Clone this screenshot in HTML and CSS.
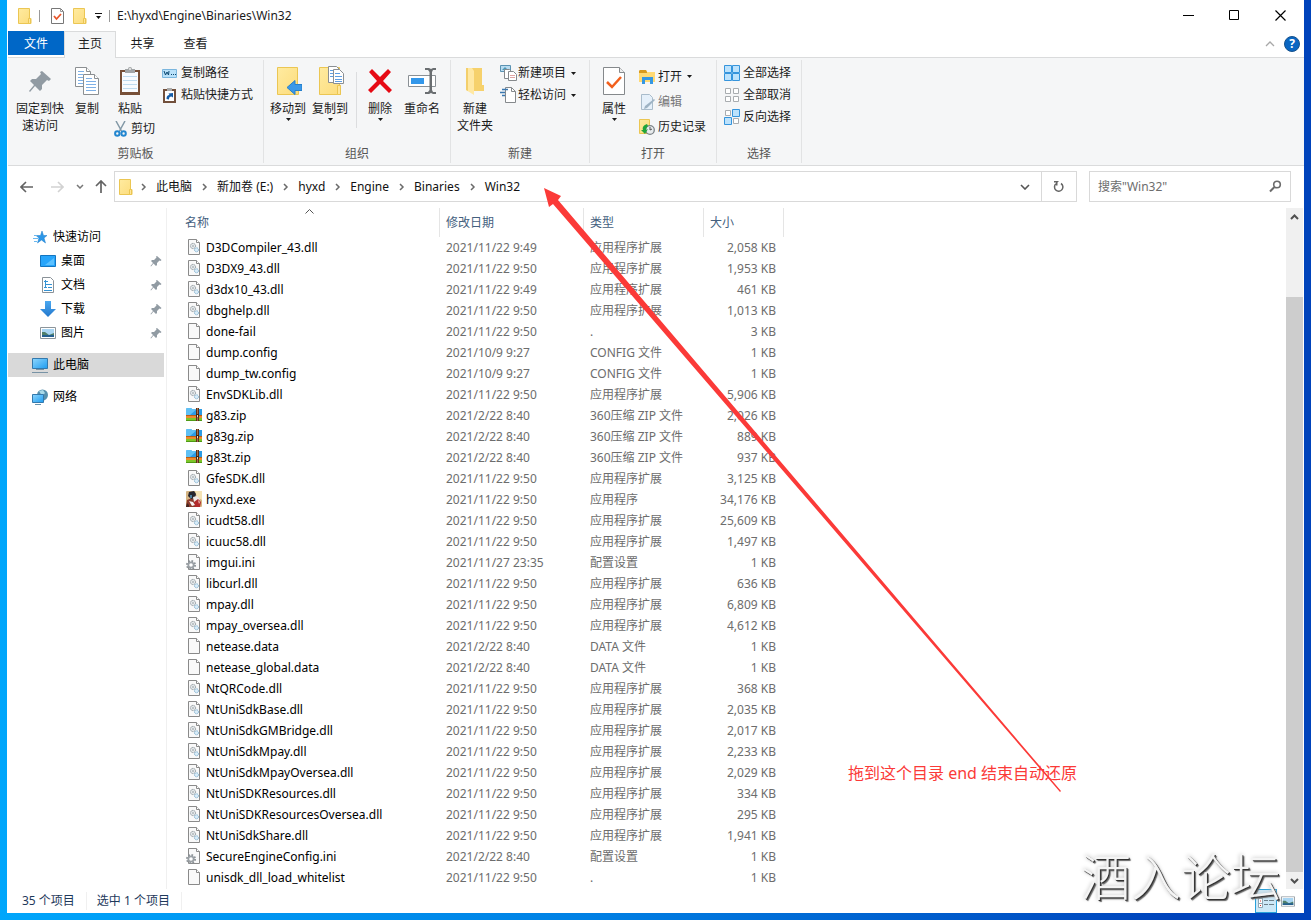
FILE: index.html
```html
<!DOCTYPE html>
<html lang="zh-CN">
<head>
<meta charset="utf-8">
<title>E:\hyxd\Engine\Binaries\Win32</title>
<link rel="stylesheet" href="styles.css">
</head>
<body>
<svg class="defs" aria-hidden="true">
  <linearGradient id="gf" x1="0" y1="0" x2="1" y2="1"><stop offset="0" stop-color="#ffeba0"/><stop offset="1" stop-color="#fcdc7c"/></linearGradient>
  <linearGradient id="gb" x1="0" y1="0" x2="1" y2="1"><stop offset="0" stop-color="#8ed6fd"/><stop offset="1" stop-color="#1e9cf0"/></linearGradient>
  <linearGradient id="gd" x1="0" y1="0" x2="0" y2="1"><stop offset="0" stop-color="#4aa8f0"/><stop offset="1" stop-color="#2277cc"/></linearGradient>
  <symbol id="page" viewBox="0 0 16 16"><path d="M2.500.500h8l3 3v12h-11z" fill="#f9f9f9" stroke="#8a8a8a"/><path d="M10.500.500v3h3" fill="#fff" stroke="#8a8a8a"/></symbol>
  <symbol id="dll" viewBox="0 0 16 16"><path d="M2.500.500h8l3 3v12h-11z" fill="#f9f9f9" stroke="#8a8a8a"/><path d="M10.500.500v3h3" fill="#fff" stroke="#8a8a8a"/><circle cx="7" cy="7" r="2.600" fill="#e4e8ea" stroke="#8d969c" stroke-dasharray="1.300 .5"/><circle cx="7" cy="7" r=".8" fill="#8d969c"/><circle cx="10.500" cy="10.800" r="2" fill="#d9ecf8" stroke="#82b1cf" stroke-dasharray="1.100 .4"/></symbol>
  <symbol id="ini" viewBox="0 0 16 16"><path d="M2.500.500h8l3 3v12h-11z" fill="#f9f9f9" stroke="#8a8a8a"/><path d="M10.500.500v3h3" fill="#fff" stroke="#8a8a8a"/><circle cx="5" cy="11" r="4" fill="none" stroke="#8b9196" stroke-width="2" stroke-dasharray="1.600 1.540"/><circle cx="5" cy="11" r="2.700" fill="#fff" stroke="#9aa0a5" stroke-width="1.800"/></symbol>
  <symbol id="zip" viewBox="0 0 16 16"><path d="M0 2l1-1h4l1 1h10v6H0z" fill="#2b9be4"/><path d="M0 2l1-1h4l1 1h5L4 8H0z" fill="#5fc0f4"/><path d="M0 8h16v3H0z" fill="#ee8a2c"/><path d="M0 8h16v1H0z" fill="#b95e18"/><path d="M0 11h16v3H0z" fill="#7dc62a"/><path d="M0 13h16v1H0z" fill="#4f9a16"/><path d="M10 1h3v13h-3z" fill="#5b3018"/><path d="M11 1h1v13h-1z" fill="#a8714a"/><path d="M10 7h3v3h-3z" fill="#3f2616"/><path d="M11 8h1v2h-1z" fill="#f3ddb8"/></symbol>
  <symbol id="exe" viewBox="0 0 16 16"><rect width="16" height="16" rx="1" fill="#d5b584"/><path d="M9 0h7v9l-5-3z" fill="#f4e3b6"/><path d="M0 16l1-7 5-2 5 3 1 6z" fill="#8c3b2c"/><path d="M3 1l5-1 2 3-1 4-4 1-3-3z" fill="#26262e"/><path d="M4 4h2v3H4z" fill="#4e7f9b"/><path d="M7 6l4-1 3 3-3 4-3-1z" fill="#efeae8"/><path d="M8 11l4-3 3 3-1 5H9z" fill="#b22a2c"/><path d="M3 10l4 1 2 3-3 1z" fill="#f7f1f2"/><path d="M12 9l2 2-1 2z" fill="#f4c5be"/><path d="M1 12l2 2v2H0z" fill="#452520"/></symbol>
  <symbol id="folder" viewBox="0 0 14 16"><path d="M.500.500h11v10h1.500v5H.500z" fill="url(#gf)" stroke="#ebc653"/><path d="M10.500 15.500v-5h2v5z" fill="#ffe69a" stroke="#ebc653"/></symbol>
  <symbol id="pin" viewBox="0 0 24 24"><path d="M14 2l9 8-2 2-2-1-5 5 0 4-2 2-5-5-5 6-1-1 5-6-4-4 2-2 4 0 5-5-1-2z" fill="#919ba3"/></symbol>
  <symbol id="caret" viewBox="0 0 5 3"><path d="M0 0h5L2.500 3z" fill="#1a1a1a"/></symbol>
  <symbol id="sep" viewBox="0 0 24 12"><path d="M10.500 3l3 3-3 3" fill="none" stroke="#6b6b6b" stroke-width="1.500"/></symbol>
  <symbol id="picture" viewBox="0 0 16 12"><path d="M.500.500h15v11H.500z" fill="#fff" stroke="#8c959b"/><path d="M2 2h12v8H2z" fill="#a9d5f2"/><path d="M2 5l3 0 4 3 5-2v4H2z" fill="#4f7f6b"/><path d="M2 8l12 0v2H2z" fill="#25608f"/></symbol>
</svg>

<main class="window">
  <header class="titlebar">
    <svg class="q-folder" width="14" height="16"><use href="#folder"/></svg>
    <i class="bar"></i>
    <button class="plain q-check" aria-label="属性"><svg width="13" height="16" viewBox="0 0 13 16"><path d="M.500.500h9l3 3v12H.500z" fill="#fff" stroke="#777"/><path d="M9.500.500v3h3" fill="none" stroke="#999"/><path d="M3 8l2.500 3L10 6" fill="none" stroke="#e8562a" stroke-width="1.800"/></svg></button>
    <button class="plain q-new" aria-label="新建文件夹"><svg width="14" height="16"><use href="#folder"/></svg></button>
    <button class="plain q-more" aria-label="自定义快速访问工具栏"><svg width="7" height="6" viewBox="0 0 7 6"><path d="M0 0h7v1H0zM1 3h5L3.500 6z" fill="#111"/></svg></button>
    <i class="bar"></i>
    <h1>E:\hyxd\Engine\Binaries\Win32</h1>
    <div class="controls">
      <button class="plain" aria-label="最小化"><svg width="11" height="11"><path d="M0 5.500h11" stroke="#000"/></svg></button>
      <button class="plain" aria-label="最大化"><svg width="11" height="11"><path d="M.500.500h9v9h-9z" fill="none" stroke="#000"/></svg></button>
      <button class="plain" aria-label="关闭"><svg width="11" height="11"><path d="M.500.500l10 10M10.500.500l-10 10" stroke="#000" stroke-width="1.200"/></svg></button>
    </div>
  </header>

  <nav class="tabs">
    <button class="tab file">文件</button>
    <button class="tab active">主页</button>
    <button class="tab">共享</button>
    <button class="tab">查看</button>
    <div class="tab-tools">
      <button class="plain" aria-label="折叠功能区"><svg width="10" height="6" viewBox="0 0 10 6"><path d="M1 5l4-4 4 4" fill="none" stroke="#a8a8a8" stroke-width="1.300"/></svg></button>
      <button class="help" aria-label="帮助">?</button>
    </div>
  </nav>

  <section class="ribbon">
    <div class="group">
      <div class="group-body clip">
        <button class="big w56"><span class="pic"><svg width="24" height="24"><use href="#pin"/></svg></span>固定到快<br>速访问</button>
        <button class="big w38"><span class="pic"><svg width="26" height="30" viewBox="0 0 26 30"><g fill="#fff" stroke="#8b8f92"><path d="M1.500 1.500h11l4 4v15h-15z"/><path d="M12.500 1.500v4h4M9.500 8.500h11l4 4v16h-15z"/><path d="M20.500 8.500v4h4"/></g><path d="M4 5.500h6M4 8.500h5M4 11.500h5M4 14.500h5M4 17.500h5M12 12.500h6M12 15.500h10M12 18.500h10M12 21.500h10M12 24.500h10" stroke="#7eb0e6"/></svg></span>复制</button>
        <div class="paste-col">
          <button class="big w48"><span class="pic"><svg width="22" height="30" viewBox="0 0 22 30"><path d="M1 4h20v25H1z" fill="#775038"/><path d="M3 6h16v20H3z" fill="#f8fcff"/><path d="M4 10.500h14M4 14.500h14M4 18.500h14M4 22.500h14" stroke="#bfdcf0"/><path d="M6 3h3a2 2 0 0 1 4 0h3v4H6z" fill="#a2a6a8"/><circle cx="11" cy="3" r="1" fill="#eee"/></svg></span>粘贴</button>
          <button class="small cut"><svg width="13" height="16" viewBox="0 0 13 16"><path d="M2 0l5.500 10M11 0L5.500 10" stroke="#8298a6" stroke-width="1.500"/><g fill="none" stroke="#2386cf" stroke-width="2"><circle cx="3.300" cy="12.500" r="2.200"/><circle cx="9.600" cy="12.500" r="2.200"/></g></svg>剪切</button>
        </div>
        <div class="smalls">
          <button class="small"><svg width="16" height="16" viewBox="0 0 16 16"><path d="M.500 4.500h14v8H.500z" fill="#b9e1fa" stroke="#7bb6de"/><path d="M2 6l1.500 4L5 7l1.500 3L7 6M9 9.500h1M11 9.500h1M13 9.500h1" fill="none" stroke="#0a4771"/></svg>复制路径</button>
          <button class="small"><svg width="16" height="16" viewBox="0 0 16 16"><path d="M1 2h13v14H1z" fill="#72503c"/><path d="M3 4h9v10H3z" fill="#fff"/><path d="M5 1h5v3H5z" fill="#aaa"/><path d="M4.500 12c0-3 1-4 3-4l-1-1.500L11 6v4.500L9.500 9.500c-2 0-2.500 1-2.500 3z" fill="#145ca8"/></svg>粘贴快捷方式</button>
        </div>
      </div>
      <div class="group-label">剪贴板</div>
    </div>

    <div class="group">
      <div class="group-body org">
        <button class="big w42"><span class="pic"><svg width="28" height="30" viewBox="0 0 28 30"><path d="M3.500 1.500h20v18h1v9h-21z" fill="url(#gf)" stroke="#ebc653"/><path d="M13 21.500l8-7v4h7v6h-7v4z" fill="#3b98e8" stroke="#2580cc"/></svg></span>移动到<svg class="c" width="5" height="3"><use href="#caret"/></svg></button>
        <button class="big w42"><span class="pic"><svg width="28" height="30" viewBox="0 0 28 30"><path d="M3.500 1.500h20v18h1v9h-21z" fill="url(#gf)" stroke="#ebc653"/><path d="M21.500 28.500v-9h3v9z" fill="#ffe69a" stroke="#ebc653"/><g fill="#fff" stroke="#8b8f92"><path d="M12.500.500h8l3 3v13h-11z"/><path d="M17.500 3.500h6l4 4v10h-10z"/></g><path d="M14 4.500h3M14 7.500h3M14 10.500h3M19 7.500h5M19 10.500h7M19 13.500h7M19 15.500h7" stroke="#5f9ee2"/></svg></span>复制到<svg class="c" width="5" height="3"><use href="#caret"/></svg></button>
        <i class="divider"></i>
        <button class="big w40"><span class="pic"><svg width="26" height="28" viewBox="0 0 26 28"><path d="M2 5l3-3 8 8 8-8 3 3-8 9 9 9-3 3-9-9-9 9-3-3 9-9z" fill="#e60a14"/></svg></span>删除<svg class="c" width="5" height="3"><use href="#caret"/></svg></button>
        <button class="big w44"><span class="pic"><svg width="30" height="28" viewBox="0 0 30 28"><path d="M1.500 8.500h27v11h-27z" fill="#fff" stroke="#8a9095"/><path d="M4 11h13v6H4z" fill="#3397ea"/><path d="M18 1h4l2 1 2-1h3v2h-3l-1 2v18l1 2h3v2h-3l-2-1-2 1h-4v-2h3l1.500-2V5L21 3h-3z" fill="#6a6e71"/></svg></span>重命名</button>
      </div>
      <div class="group-label">组织</div>
    </div>

    <div class="group">
      <div class="group-body new">
        <button class="big w40"><span class="pic"><svg width="22" height="28" viewBox="0 0 22 28"><path d="M8 1h10v17h2v6H8z" fill="#f6d16c"/><path d="M2 1h6l2 3v24l-8-5z" fill="#ffe8a3"/><path d="M2 1h2v23l-2-1z" fill="#f3cf6c"/></svg></span>新建<br>文件夹</button>
        <div class="smalls">
          <button class="small"><svg width="17" height="16" viewBox="0 0 17 16"><path d="M.500.500h10v6H.500z" fill="#b9dcf1" stroke="#5a92b2"/><path d="M2 5l3-3 3 3" fill="#4a98b8"/><g fill="#fff" stroke="#85898c"><path d="M4.500 4.500h5l3 3v6h-8z"/><path d="M8.500 6.500h5l3 3v6h-8z"/></g><path d="M10 10.500h5M10 12.500h5" stroke="#e0a5a5"/></svg><span>新建项目</span><svg width="5" height="3"><use href="#caret"/></svg></button>
          <button class="small"><svg width="17" height="16" viewBox="0 0 17 16"><path d="M5.500.500h6l4 4v11h-10z" fill="#fff" stroke="#85898c"/><path d="M11.500.500v4h4" fill="none" stroke="#85898c"/><path d="M2 2.500h6M0 5.500h5M2 8.500h3" stroke="#3b78b0" stroke-width="1.500"/></svg><span>轻松访问</span><svg width="5" height="3"><use href="#caret"/></svg></button>
        </div>
      </div>
      <div class="group-label">新建</div>
    </div>

    <div class="group">
      <div class="group-body open">
        <button class="big w40"><span class="pic"><svg width="22" height="30" viewBox="0 0 22 30"><path d="M.500 1.500h16l5 5v22H.500z" fill="#fff" stroke="#85898c"/><path d="M16.500 1.500v5h5" fill="#eee" stroke="#85898c"/><path d="M4 16l5 5 9-10" fill="none" stroke="#f2601d" stroke-width="2.500"/></svg></span>属性<svg class="c" width="5" height="3"><use href="#caret"/></svg></button>
        <div class="smalls tall">
          <button class="small"><svg width="16" height="16" viewBox="0 0 16 16"><path d="M0 2l1-1h6l1 2h8v10H0z" fill="#ffda73"/><path d="M0 2l1-1h6l1 2v1H0z" fill="#d99a1c"/><path d="M3 15V8h11v7h-3v-4H6v4z" fill="#3597e2"/></svg><span>打开</span><svg width="5" height="3"><use href="#caret"/></svg></button>
          <button class="small" disabled><svg width="16" height="16" viewBox="0 0 16 16"><path d="M2.500.500h8l3 3v12h-11z" fill="#e5f0fa" stroke="#a9bccb"/><path d="M15 5l1 1-8 8-3 1 1-3z" fill="#9eb3c4"/></svg><span>编辑</span></button>
          <button class="small"><svg width="16" height="16" viewBox="0 0 16 16"><path d="M.500.500h10v14H.500z" fill="url(#gf)" stroke="#ebc653"/><circle cx="11" cy="11" r="4.300" fill="#e7ebed" stroke="#7d8488" stroke-width="1.300"/><path d="M11 8v3l2-1" fill="none" stroke="#555"/><path d="M8 5c-3 1-5 3-4 6l-2 0 4 4 3-5-2 1c0-2 1-3 2-4z" fill="#22a53b"/></svg><span>历史记录</span></button>
        </div>
      </div>
      <div class="group-label">打开</div>
    </div>

    <div class="group">
      <div class="group-body sel">
        <div class="smalls">
          <button class="small"><svg width="16" height="16"><g fill="#bce2fc" stroke="#3594dc"><path d="M.500.500h7v7h-7zM8.500.500h7v7h-7zM.500 8.500h7v7h-7zM8.500 8.500h7v7h-7z"/></g></svg>全部选择</button>
          <button class="small"><svg width="16" height="16"><g fill="#fff" stroke="#a9adb0"><path d="M1.500 1.500h5v5h-5zM9.500 1.500h5v5h-5zM1.500 9.500h5v5h-5zM9.500 9.500h5v5h-5z"/></g></svg>全部取消</button>
          <button class="small"><svg width="16" height="16"><g fill="#fff" stroke="#a9adb0"><path d="M1.500 1.500h5v5h-5zM9.500 9.500h5v5h-5z"/></g><g fill="#bce2fc" stroke="#3594dc"><path d="M8.500.500h7v7h-7zM.500 8.500h7v7h-7z"/></g></svg>反向选择</button>
        </div>
      </div>
      <div class="group-label">选择</div>
    </div>
  </section>

  <section class="address">
    <div class="history">
      <button class="plain" aria-label="后退"><svg width="14" height="12" viewBox="0 0 14 12"><path d="M6 1L1 6l5 5M1 6h12" fill="none" stroke="#636363" stroke-width="1.600"/></svg></button>
      <button class="plain" aria-label="前进"><svg width="14" height="12" viewBox="0 0 14 12"><path d="M8 1l5 5-5 5M13 6H1" fill="none" stroke="#d2d2d2" stroke-width="1.600"/></svg></button>
      <button class="plain recent" aria-label="最近浏览的位置"><svg width="8" height="5" viewBox="0 0 8 5"><path d="M1 1l3 3 3-3" fill="none" stroke="#777" stroke-width="1.500"/></svg></button>
      <button class="plain up" aria-label="上移"><svg width="12" height="13" viewBox="0 0 12 13"><path d="M1 6l5-5 5 5M6 1v12" fill="none" stroke="#636363" stroke-width="1.700"/></svg></button>
    </div>
    <div class="path">
      <svg width="14" height="16"><use href="#folder"/></svg>
      <svg class="s" width="25" height="12"><use href="#sep"/></svg><a href="#">此电脑</a>
      <svg class="s" width="25" height="12"><use href="#sep"/></svg><a href="#">新加卷 (E:)</a>
      <svg class="s" width="25" height="12"><use href="#sep"/></svg><a href="#">hyxd</a>
      <svg class="s" width="25" height="12"><use href="#sep"/></svg><a href="#">Engine</a>
      <svg class="s" width="25" height="12"><use href="#sep"/></svg><a href="#">Binaries</a>
      <svg class="s" width="25" height="12"><use href="#sep"/></svg><a href="#">Win32</a>
      <button class="plain drop" aria-label="以前的位置"><svg width="10" height="6" viewBox="0 0 10 6"><path d="M1 1l4 4 4-4" fill="none" stroke="#555" stroke-width="1.600"/></svg></button>
      <button class="plain refresh" aria-label="刷新"><svg width="12" height="12" viewBox="0 0 12 12"><path d="M3 2.800A4.200 4.200 0 1 0 8 2.500" fill="none" stroke="#636363" stroke-width="1.500"/><path d="M6 0h-5v1.500h2v3h1.500V1.500z" fill="#636363"/></svg></button>
    </div>
    <label class="search">
      <input type="text" placeholder='搜索"Win32"' aria-label="搜索">
      <svg width="13" height="13" viewBox="0 0 13 13"><circle cx="8" cy="4.500" r="3.300" fill="none" stroke="#6b6b6b" stroke-width="1.600"/><path d="M5.500 7L1 11.500" stroke="#6b6b6b" stroke-width="2"/></svg>
    </label>
  </section>

  <div class="content">
    <nav class="tree">
      <a href="#"><svg width="16" height="16" viewBox="0 0 16 16"><path d="M9 2l1.500 4.500H14l-3 2.500 1.500 5-4-3-4 3L6 9 3 6.500h4.500z" fill="#2c97e8" stroke="#1d7dca" stroke-width=".5"/><path d="M1 6.500h3M0 9.500h5M1 12.500h3" stroke="#6bb8ef"/></svg>快速访问</a>
      <a href="#" class="sub"><svg width="16" height="16" viewBox="0 0 16 16"><path d="M.500 2.500h15v11H.500z" fill="#27a5fb" stroke="#1375c0"/><path d="M14 5v7H5z" fill="#5cc1ff"/></svg>桌面<svg class="p" width="12" height="12"><use href="#pin"/></svg></a>
      <a href="#" class="sub"><svg width="16" height="16" viewBox="0 0 16 16"><path d="M2.500.500h8l3 3v12h-11z" fill="#fff" stroke="#8a9298"/><path d="M4 4.500h4M5 7.500h7M4 10.500h3M8 10.500h4M4 13.500h8M5.500 3v8" stroke="#3593d4"/></svg>文档<svg class="p" width="12" height="12"><use href="#pin"/></svg></a>
      <a href="#" class="sub"><svg width="16" height="16" viewBox="0 0 16 16"><path d="M5 0h6v8h5l-8 8-8-8h5z" fill="url(#gd)"/></svg>下载<svg class="p" width="12" height="12"><use href="#pin"/></svg></a>
      <a href="#" class="sub"><svg width="16" height="12"><use href="#picture"/></svg>图片<svg class="p" width="12" height="12"><use href="#pin"/></svg></a>
      <a href="#" class="root selected"><svg width="16" height="16" viewBox="0 0 16 16"><path d="M.500 1.500h15v10H.500z" fill="url(#gb)" stroke="#3379ad"/><path d="M4 12.500h8M0 15.500h16" stroke="#7893a5"/></svg>此电脑</a>
      <a href="#" class="root"><svg width="16" height="16" viewBox="0 0 16 16"><circle cx="10.500" cy="6" r="5.500" fill="#5690ad"/><path d="M7 2l4-1 2 3-3 3z" fill="#a8d9e8"/><path d="M.500 5.500h11v8H.500z" fill="url(#gb)" stroke="#3379ad"/><path d="M3 15.500h6" stroke="#6793ad"/></svg>网络</a>
    </nav>

    <div class="files">
      <table>
        <colgroup><col class="c-name"><col class="c-date"><col class="c-type"><col class="c-size"></colgroup>
        <thead><tr><th><svg class="sort" width="9" height="5" viewBox="0 0 9 5"><path d="M.500 4.500l4-4 4 4" fill="none" stroke="#555"/></svg>名称</th><th>修改日期</th><th>类型</th><th>大小</th></tr></thead>
        <tbody>
        <tr><td><svg><use href="#dll"/></svg>D3DCompiler_43.dll</td><td>2021/11/22 9:49</td><td>应用程序扩展</td><td>2,058 KB</td></tr>
        <tr><td><svg><use href="#dll"/></svg>D3DX9_43.dll</td><td>2021/11/22 9:50</td><td>应用程序扩展</td><td>1,953 KB</td></tr>
        <tr><td><svg><use href="#dll"/></svg>d3dx10_43.dll</td><td>2021/11/22 9:49</td><td>应用程序扩展</td><td>461 KB</td></tr>
        <tr><td><svg><use href="#dll"/></svg>dbghelp.dll</td><td>2021/11/22 9:50</td><td>应用程序扩展</td><td>1,013 KB</td></tr>
        <tr><td><svg><use href="#page"/></svg>done-fail</td><td>2021/11/22 9:50</td><td>.</td><td>3 KB</td></tr>
        <tr><td><svg><use href="#page"/></svg>dump.config</td><td>2021/10/9 9:27</td><td>CONFIG 文件</td><td>1 KB</td></tr>
        <tr><td><svg><use href="#page"/></svg>dump_tw.config</td><td>2021/10/9 9:27</td><td>CONFIG 文件</td><td>1 KB</td></tr>
        <tr><td><svg><use href="#dll"/></svg>EnvSDKLib.dll</td><td>2021/11/22 9:50</td><td>应用程序扩展</td><td>5,906 KB</td></tr>
        <tr><td><svg><use href="#zip"/></svg>g83.zip</td><td>2021/2/22 8:40</td><td>360压缩 ZIP 文件</td><td>2,026 KB</td></tr>
        <tr><td><svg><use href="#zip"/></svg>g83g.zip</td><td>2021/2/22 8:40</td><td>360压缩 ZIP 文件</td><td>889 KB</td></tr>
        <tr><td><svg><use href="#zip"/></svg>g83t.zip</td><td>2021/2/22 8:40</td><td>360压缩 ZIP 文件</td><td>937 KB</td></tr>
        <tr><td><svg><use href="#dll"/></svg>GfeSDK.dll</td><td>2021/11/22 9:50</td><td>应用程序扩展</td><td>3,125 KB</td></tr>
        <tr><td><svg><use href="#exe"/></svg>hyxd.exe</td><td>2021/11/22 9:50</td><td>应用程序</td><td>34,176 KB</td></tr>
        <tr><td><svg><use href="#dll"/></svg>icudt58.dll</td><td>2021/11/22 9:50</td><td>应用程序扩展</td><td>25,609 KB</td></tr>
        <tr><td><svg><use href="#dll"/></svg>icuuc58.dll</td><td>2021/11/22 9:50</td><td>应用程序扩展</td><td>1,497 KB</td></tr>
        <tr><td><svg><use href="#ini"/></svg>imgui.ini</td><td>2021/11/27 23:35</td><td>配置设置</td><td>1 KB</td></tr>
        <tr><td><svg><use href="#dll"/></svg>libcurl.dll</td><td>2021/11/22 9:50</td><td>应用程序扩展</td><td>636 KB</td></tr>
        <tr><td><svg><use href="#dll"/></svg>mpay.dll</td><td>2021/11/22 9:50</td><td>应用程序扩展</td><td>6,809 KB</td></tr>
        <tr><td><svg><use href="#dll"/></svg>mpay_oversea.dll</td><td>2021/11/22 9:50</td><td>应用程序扩展</td><td>4,612 KB</td></tr>
        <tr><td><svg><use href="#page"/></svg>netease.data</td><td>2021/2/22 8:40</td><td>DATA 文件</td><td>1 KB</td></tr>
        <tr><td><svg><use href="#page"/></svg>netease_global.data</td><td>2021/2/22 8:40</td><td>DATA 文件</td><td>1 KB</td></tr>
        <tr><td><svg><use href="#dll"/></svg>NtQRCode.dll</td><td>2021/11/22 9:50</td><td>应用程序扩展</td><td>368 KB</td></tr>
        <tr><td><svg><use href="#dll"/></svg>NtUniSdkBase.dll</td><td>2021/11/22 9:50</td><td>应用程序扩展</td><td>2,035 KB</td></tr>
        <tr><td><svg><use href="#dll"/></svg>NtUniSdkGMBridge.dll</td><td>2021/11/22 9:50</td><td>应用程序扩展</td><td>2,017 KB</td></tr>
        <tr><td><svg><use href="#dll"/></svg>NtUniSdkMpay.dll</td><td>2021/11/22 9:50</td><td>应用程序扩展</td><td>2,233 KB</td></tr>
        <tr><td><svg><use href="#dll"/></svg>NtUniSdkMpayOversea.dll</td><td>2021/11/22 9:50</td><td>应用程序扩展</td><td>2,029 KB</td></tr>
        <tr><td><svg><use href="#dll"/></svg>NtUniSDKResources.dll</td><td>2021/11/22 9:50</td><td>应用程序扩展</td><td>334 KB</td></tr>
        <tr><td><svg><use href="#dll"/></svg>NtUniSDKResourcesOversea.dll</td><td>2021/11/22 9:50</td><td>应用程序扩展</td><td>295 KB</td></tr>
        <tr><td><svg><use href="#dll"/></svg>NtUniSdkShare.dll</td><td>2021/11/22 9:50</td><td>应用程序扩展</td><td>1,941 KB</td></tr>
        <tr><td><svg><use href="#ini"/></svg>SecureEngineConfig.ini</td><td>2021/2/22 8:40</td><td>配置设置</td><td>1 KB</td></tr>
        <tr><td><svg><use href="#page"/></svg>unisdk_dll_load_whitelist</td><td>2021/11/22 9:50</td><td>.</td><td>1 KB</td></tr>
        </tbody>
      </table>
    </div>

    <div class="scrollbar">
      <button class="plain" aria-label="向上滚动"><svg width="9" height="6" viewBox="0 0 9 6"><path d="M1 5l3.500-3.500L8 5" fill="none" stroke="#505050" stroke-width="2"/></svg></button>
      <span></span>
      <span class="thumb"></span>
      <button class="plain" aria-label="向下滚动"><svg width="9" height="6" viewBox="0 0 9 6"><path d="M1 1l3.500 3.500L8 1" fill="none" stroke="#505050" stroke-width="2"/></svg></button>
    </div>
  </div>

  <footer class="status">
    <span>35 个项目</span><span>选中 1 个项目</span>
    <div class="views">
      <button class="plain view on" aria-label="详细信息"><svg width="16" height="14" viewBox="0 0 16 14"><path d="M.500.500h4v13h-4z" fill="#fff" stroke="#8fa7b5"/><path d="M.500 4.500h4M.500 9.500h4" stroke="#8fa7b5"/><path d="M2 2h1v1H2z" fill="#2b7fc4"/><path d="M2 6.500h1v1H2zM2 11h1v1H2z" fill="#c33"/><path d="M6 2.500h4M11 2.500h5M6 6.500h4M11 6.500h5M6 10.500h4M11 10.500h5" stroke="#6d7f8a"/></svg></button>
      <button class="plain view" aria-label="大图标"><svg width="14" height="11" viewBox="0 0 16 12"><use href="#picture"/></svg></button>
    </div>
  </footer>
</main>

<svg class="arrow" width="1070" height="800" aria-hidden="true"><path d="M544 188l17 8-3 4 503 591-1 1L553 204l-4 3z" fill="#fb3a38"/></svg>
<p class="note">拖到这个目录 end 结束自动还原</p>
<p class="watermark">酒入论坛</p>
</body>
</html>
```
FILE: styles.css
```css
* { box-sizing: border-box; }

body {
  margin: 0;
  position: relative;
  overflow: hidden;
  background: linear-gradient(90deg, #00a6fb 0, #0080e4 45%, #0043bb 90%);
  font: 12px/17px "Noto Sans", "Noto Sans CJK SC", sans-serif;
  color: #1b1b1b;
}

button, input { font: inherit; color: inherit; }
button { border: 0; background: none; padding: 0; margin: 0; }
a { color: inherit; text-decoration: none; }
svg { flex: none; display: block; }
.defs { position: absolute; width: 0; height: 0; }
.plain { display: flex; align-items: center; justify-content: center; }

.window {
  min-height: calc(100vh - 7px);
  margin: 0 7px 7px;
  padding-left: 1px;
  background: #fff;
  display: flex;
  flex-direction: column;
}

/* title bar */
.titlebar { display: flex; align-items: center; height: 31px; padding-left: 10px; }
.titlebar .bar { width: 1px; height: 12px; background: #999; margin: 0 7px; }
.q-check { margin: 0 9px 0 4px; }
.q-more { margin-left: 8px; }
.titlebar h1 { margin: 0; font-size: 12px; font-weight: 400; }
.controls { margin-left: auto; display: flex; align-self: stretch; padding-right: 1px; }
.controls .plain { width: 46px; }

/* tabs */
.tabs { display: flex; height: 27px; border-bottom: 1px solid #dadbdc; }
.tab { width: 53px; height: 24px; }
.tab.file { width: 56px; background: #0067c7; color: #fff; }
.tab.active { width: 52px; height: 27px; padding-bottom: 3px; background: #f5f6f7; border: 1px solid #dadbdc; border-bottom: 0; }
.tab-tools { margin-left: auto; display: flex; align-items: center; gap: 9px; padding-right: 4px; }
.help { width: 16px; height: 16px; border-radius: 8px; background: #0a66c2; border: 1px solid #16518c; color: #fff; font-weight: 700; line-height: 14px; }

/* ribbon */
.ribbon { display: flex; min-height: 108px; padding: 2px 0; background: #f5f6f7; border-bottom: 1px solid #dadbdc; }
.group { display: flex; flex-direction: column; border-right: 1px solid #e2e3e4; }
.group-body { display: flex; height: 85px; }
.group-label { text-align: center; line-height: 18px; color: #555; }
.group-body.clip { padding: 0 10px 0 4px; }
.group-body.org { padding: 0 6px 0 3px; }
.group-body.new { padding: 0 13px 0 4px; }
.group-body.open { padding: 0 8px 0 4px; }
.group-body.sel { padding: 0 10px 0 7px; }
.big { display: flex; flex-direction: column; align-items: center; justify-content: flex-start; padding-top: 6px; height: 74px; white-space: nowrap; text-align: center; }
.big .pic { display: flex; align-items: center; justify-content: center; height: 30px; margin-bottom: 4px; }
.big .c { margin-top: 1px; }
.w38 { width: 38px; }
.w40 { width: 40px; }
.w42 { width: 42px; }
.w44 { width: 44px; }
.w48 { width: 48px; }
.w56 { width: 56px; }
.paste-col { width: 56px; }
.paste-col .big { height: 60px; }
.small { display: flex; align-items: center; gap: 3px; height: 22px; line-height: 18px; white-space: nowrap; }
.cut { height: 17px; margin-left: 8px; gap: 4px; }
.smalls { padding-top: 2px; }
.new .smalls { padding-left: 5px; }
.new .small { gap: 1px; }
.new .small span { margin-right: 4px; }
.open .smalls { padding-left: 5px; }
.open .small span { margin-right: 2px; }
.smalls.tall { padding-top: 4px; }
.tall .small { height: 25px; }
.small:disabled { color: #777; }
.divider { width: 1px; height: 56px; margin: 12px 3px 0 5px; background: #dcdddf; }

/* address row */
.address { display: flex; height: 42px; padding: 5px 13px 6px 12px; }
.history { display: flex; align-items: center; width: 94px; }
.history .plain:nth-child(2) { margin-left: 16px; }
.recent { margin-left: 12px; }
.up { margin-left: 11px; }
.path { flex: 1; display: flex; align-items: center; padding-left: 4px; border: 1px solid #d9d9d9; line-height: 18px; color: #111; }
.path > svg:nth-of-type(2) { margin-left: -2px; }
.drop { width: 32px; margin-left: auto; }
.refresh { align-self: stretch; width: 35px; border-left: 1px solid #d9d9d9; }
.search { width: 202px; margin-left: 12px; display: flex; align-items: center; padding: 0 8px; border: 1px solid #d9d9d9; }
.search input { flex: 1; min-width: 0; border: 0; padding: 0; outline: 0; background: none; }
.search input::placeholder { color: #6d6d6d; }

/* content */
.content { flex: 1; display: flex; }
.tree { width: 159px; padding: 17px 2px 0 0; border-right: 1px solid #f0f0f0; line-height: 18px; }
.tree a { display: flex; align-items: center; gap: 4px; height: 24px; padding: 0 2px 0 25px; color: #000; }
.tree .sub { gap: 5px; padding-left: 32px; }
.tree .root { margin-top: 8px; padding-left: 24px; gap: 5px; }
.tree .p { margin-left: auto; }
.selected { background: #d9d9d9; }

.files { flex: 1; }
table { border-collapse: separate; border-spacing: 0; table-layout: fixed; width: 617px; }
.c-name { width: 273px; }
.c-date { width: 144px; }
.c-type { width: 120px; }
.c-size { width: 80px; }
th { height: 29px; padding: 0 0 0 6px; border-right: 1px solid #e5e5e5; text-align: left; font-weight: 400; color: #44607e; }
th:first-child { padding-left: 18px; position: relative; }
.sort { position: absolute; left: 138px; top: 1px; }
td { height: 21px; line-height: 21px; padding: 0 0 0 6px; color: #6d6d6d; white-space: nowrap; }
td:first-child { display: flex; align-items: center; gap: 4px; padding-left: 19px; color: #000; }
td svg { width: 16px; height: 16px; margin-bottom: 1px; }
td:last-child { text-align: right; padding-right: 8px; }

.scrollbar { width: 17px; display: grid; grid-template-rows: 17px 1fr 8fr 17px; background: #f0f0f0; }
.scrollbar, .views { margin-right: 1px; }
.thumb { background: #cdcdcd; }

/* status bar */
.status { display: flex; align-items: center; height: 24px; padding-left: 14px; line-height: 18px; color: #1e395b; }
.status span { padding-right: 11px; margin-right: 10px; border-right: 1px solid #f0f0f0; }
.views { margin-left: auto; display: flex; align-self: stretch; padding-right: 4px; }
.view { width: 22px; }
.view.on { background: #cce8f7; border: 1px solid #26a0da; }

/* annotation layer */
.arrow { position: absolute; left: 0; top: 0; pointer-events: none; }
.note { position: absolute; left: 848px; top: 762px; margin: 0; font-size: 16px; line-height: 22px; color: #fb3a38; white-space: nowrap; }
.watermark {
  position: absolute;
  right: 30px;
  top: 844px;
  margin: 0;
  font: 300 50px/60px "Noto Sans CJK SC", sans-serif;
  color: #f4f4f4;
  text-shadow: 1px 1px 0 #333, 2px 2px 1px #666, 0 0 4px #bbb;
  pointer-events: none;
}
```
